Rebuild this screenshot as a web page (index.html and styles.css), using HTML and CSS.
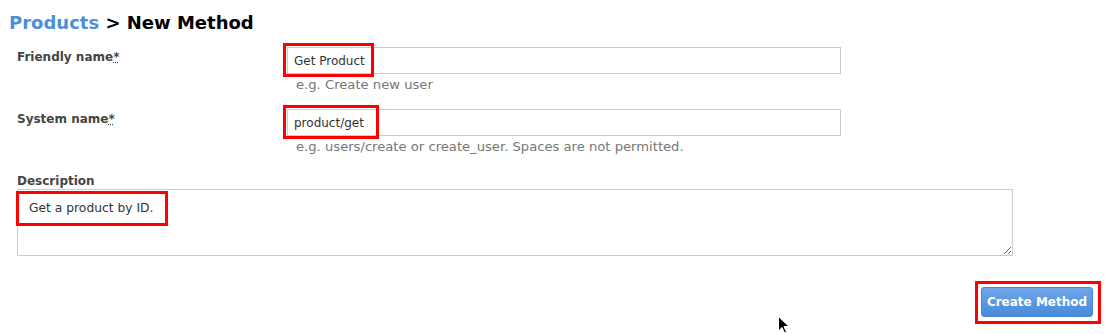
FILE: index.html
```html
<!DOCTYPE html>
<html lang="en">
<head>
  <meta charset="UTF-8" />
  <title>New Method</title>
  <link rel="stylesheet" href="styles.css">
</head>
<body>
  <div class="page">
    <h1><a href="#" class="crumb">Products</a> &gt; New Method</h1>
    <form class="method-form">
      <div class="field-row">
        <label for="friendly">Friendly name<abbr title="required">*</abbr></label>
        <div class="field">
          <input type="text" id="friendly" value="Get Product" />
          <p class="hint">e.g. Create new user</p>
        </div>
      </div>
      <div class="field-row">
        <label for="system">System name<abbr title="required">*</abbr></label>
        <div class="field">
          <input type="text" id="system" value="product/get" />
          <p class="hint">e.g. users/create or create_user. Spaces are not permitted.</p>
        </div>
      </div>
      <div class="field-stack">
        <label for="desc">Description</label>
        <textarea id="desc">Get a product by ID.</textarea>
      </div>
      <div class="actions">
        <button type="button">Create Method</button>
      </div>
    </form>

    <!-- annotation boxes -->
    <div class="mark mark-1"></div>
    <div class="mark mark-2"></div>
    <div class="mark mark-3"></div>
    <div class="mark mark-4"></div>
    <svg class="cursor" width="12" height="18" viewBox="0 0 12 18"><path d="M0.5 0.5 L0.5 15 L4 11.5 L6.5 17 L8.5 16 L6 10.5 L11 10.5 Z" fill="#000" stroke="#fff" stroke-width="1"/></svg>
  </div>
</body>
</html>
```

FILE: styles.css
```css
body { margin: 0; font-family: "DejaVu Sans", Verdana, sans-serif; color: #333; background: #fff; }
.page { position: relative; width: 1107px; height: 334px; padding: 12px 0 0 9px; box-sizing: border-box; overflow: hidden; }
h1 { margin: 0 0 13px; font-size: 18px; font-weight: bold; color: #000; line-height: 22px; }
.crumb { color: #4a90d9; text-decoration: none; }
.method-form { padding-left: 8px; }
.field-row { display: grid; grid-template-columns: 270px 554px; margin-bottom: 16px; }
label { display: block; font-size: 12px; font-weight: bold; color: #444; padding-top: 3px; }
abbr { text-decoration: underline dotted; }
input[type="text"] { width: 100%; height: 27px; box-sizing: border-box; border: 1px solid #ccc; padding: 0 6px; font-family: inherit; font-size: 12px; color: #333; }
.hint { margin: 3px 0 0 9px; font-size: 13.15px; color: #777; line-height: 16px; }
.field-stack { padding-top: 3px; }
.field-stack label { padding-top: 0; margin-bottom: 1px; }
textarea { display: block; width: 996px; height: 67px; box-sizing: border-box; border: 1px solid #ccc; padding: 11px 11px; font-family: inherit; font-size: 12.3px; color: #333; resize: vertical; margin: 0; }
.actions { display: flex; justify-content: flex-end; width: 1076px; margin-top: 31px; }
button { background: linear-gradient(#6ea6e8, #4a8ad9); color: #fff; border: 1px solid #4a86cf; border-radius: 3px; font-family: inherit; font-size: 12px; font-weight: bold; height: 30px; width: 112px; padding: 0; cursor: pointer; }
.mark { position: absolute; border: 3px solid #f00; box-sizing: border-box; }
.mark-1 { left: 283px; top: 43px; width: 91px; height: 34px; }
.mark-2 { left: 283px; top: 105px; width: 96px; height: 34px; }
.mark-3 { left: 16px; top: 191px; width: 152px; height: 35px; }
.mark-4 { left: 975px; top: 281px; width: 126px; height: 43px; }
.cursor { position: absolute; left: 778px; top: 316px; }
```
